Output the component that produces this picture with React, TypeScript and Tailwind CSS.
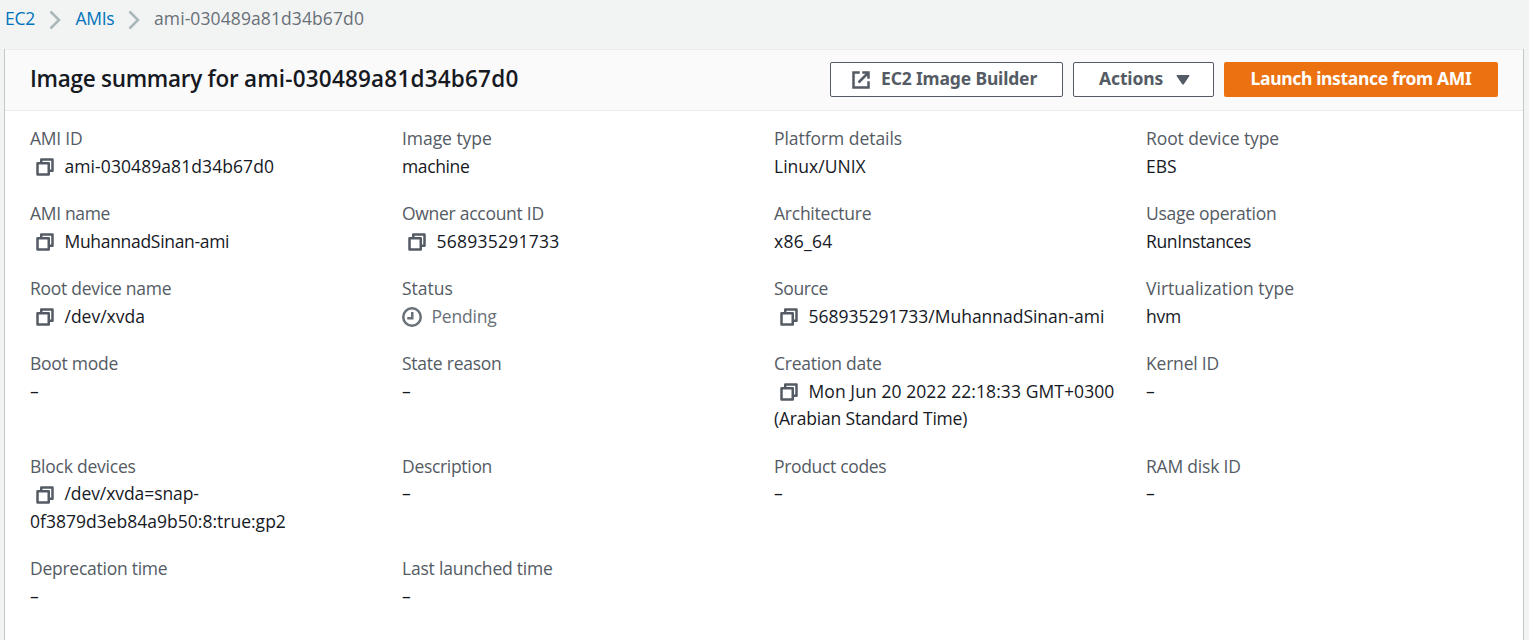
import type { ReactNode } from "react";

type Line = { text: string; className: string };

type Field = {
  label: string;
  labelClass: string;
  value?: Line[];
  kind?: "copy" | "pending";
};

const fields: Field[] = [
  { label: "AMI ID", labelClass: "tracking-[-0.25px]", value: [{ text: "ami-030489a81d34b67d0", className: "tracking-[0.08px]" }], kind: "copy" },
  { label: "Image type", labelClass: "tracking-[-0.05px]", value: [{ text: "machine", className: "tracking-[-0.38px]" }] },
  { label: "Platform details", labelClass: "tracking-[-0.05px]", value: [{ text: "Linux/UNIX", className: "tracking-[0.02px]" }] },
  { label: "Root device type", labelClass: "tracking-[-0.1px]", value: [{ text: "EBS", className: "tracking-[0px]" }] },

  { label: "AMI name", labelClass: "tracking-[-0.33px]", value: [{ text: "MuhannadSinan-ami", className: "tracking-[-0.31px]" }], kind: "copy" },
  { label: "Owner account ID", labelClass: "tracking-[-0.28px]", value: [{ text: "568935291733", className: "tracking-[0.25px]" }], kind: "copy" },
  { label: "Architecture", labelClass: "tracking-[-0.24px]", value: [{ text: "x86_64", className: "tracking-[0.28px]" }] },
  { label: "Usage operation", labelClass: "tracking-[-0.28px]", value: [{ text: "RunInstances", className: "tracking-[-0.38px]" }] },

  { label: "Root device name", labelClass: "tracking-[-0.27px]", value: [{ text: "/dev/xvda", className: "tracking-[-0.01px]" }], kind: "copy" },
  { label: "Status", labelClass: "tracking-[0px]", value: [{ text: "Pending", className: "tracking-[-0.2px]" }], kind: "pending" },
  { label: "Source", labelClass: "tracking-[-0.36px]", value: [{ text: "568935291733/MuhannadSinan-ami", className: "tracking-[-0.02px]" }], kind: "copy" },
  { label: "Virtualization type", labelClass: "tracking-[0.03px]", value: [{ text: "hvm", className: "tracking-[-0.2px]" }] },

  { label: "Boot mode", labelClass: "tracking-[-0.27px]" },
  { label: "State reason", labelClass: "tracking-[-0.24px]" },
  {
    label: "Creation date",
    labelClass: "tracking-[-0.23px]",
    value: [
      { text: "Mon Jun 20 2022 22:18:33 GMT+0300", className: "tracking-[0.08px]" },
      { text: " (Arabian Standard Time)", className: "tracking-[-0.19px]" },
    ],
    kind: "copy",
  },
  { label: "Kernel ID", labelClass: "tracking-[-0.2px]" },

  {
    label: "Block devices",
    labelClass: "tracking-[-0.23px]",
    value: [
      { text: "/dev/xvda=snap-", className: "tracking-[-0.08px]" },
      { text: "0f3879d3eb84a9b50:8:true:gp2", className: "tracking-[0.01px]" },
    ],
    kind: "copy",
  },
  { label: "Description", labelClass: "tracking-[-0.31px]" },
  { label: "Product codes", labelClass: "tracking-[-0.33px]" },
  { label: "RAM disk ID", labelClass: "tracking-[-0.2px]" },

  { label: "Deprecation time", labelClass: "tracking-[-0.26px]" },
  { label: "Last launched time", labelClass: "tracking-[-0.21px]" },
];

function Icon({ className, children }: { className?: string; children: ReactNode }) {
  return (
    <svg
      viewBox="0 0 16 16"
      fill="none"
      stroke="currentColor"
      strokeWidth="2"
      className={`inline-block size-5 shrink-0 ${className ?? ""}`}
    >
      {children}
    </svg>
  );
}

function CopyIcon() {
  return (
    <Icon className="mx-[5px] mt-[-2px] mb-[-1px] align-middle text-[#545b64]">
      <path d="M2 5h9v9H2z" strokeLinejoin="round" />
      <path d="M5 5V2h9v9h-3" strokeLinejoin="round" />
    </Icon>
  );
}

function FieldValue({ field }: { field: Field }) {
  if (!field.value) return <div className="text-[#16191f]">–</div>;
  const lines = field.value.map((line) => (
    <span key={line.text} className={line.className}>
      {line.text}
    </span>
  ));
  if (field.kind === "pending") {
    return (
      <div className="flex items-center gap-[9.5px] text-[#687078]">
        <Icon className="mt-px">
          <circle cx="8" cy="8" r="7" />
          <path d="M8.2 4v5H4.2" />
        </Icon>
        {lines}
      </div>
    );
  }
  return (
    <div className="text-[#16191f]">
      {field.kind === "copy" && (
        <span className="mr-[4.5px]">
          <CopyIcon />
        </span>
      )}
      {lines}
    </div>
  );
}

function Separator() {
  return (
    <svg viewBox="0 0 12 20" fill="none" stroke="#aab7b8" strokeWidth="2.5" className="h-5 w-3">
      <path d="M1.5 1.5 10 10l-8.5 8.5" />
    </svg>
  );
}

export default function App() {
  return (
    <div className="flex h-[640px] w-full flex-col overflow-hidden bg-[#f2f3f3] font-['Open_Sans',sans-serif] text-[17.5px] leading-[27.5px]">
      <nav className="flex h-[49px] items-start pt-[5px] pl-[5px]">
        <a className="w-[44px] tracking-[-0.2px] text-[#0073bb]">EC2</a>
        <span className="w-[26.5px] pt-[5px]"><Separator /></span>
        <a className="w-[52.5px] tracking-[-0.3px] text-[#0073bb]">AMIs</a>
        <span className="w-[26px] pt-[5px]"><Separator /></span>
        <span className="tracking-[0.1px] text-[#687078]">ami-030489a81d34b67d0</span>
      </nav>

      <main className="ml-1 flex w-[1520px] flex-1 flex-col border-x border-[#c0c8c8] bg-white">
        <header className="flex h-[62px] items-center justify-between border-y border-t-[#eaeded] border-b-[#eaeded] bg-[#fafafa] pr-[25px] pl-[25px]">
          <h1 className="pb-[3px] text-[22.5px] font-semibold text-[#16191f]">
            <span className="tracking-[-0.28px]">Image summary for </span>
            <span className="tracking-[0.2px]">ami-030489a81d34b67d0</span>
          </h1>
          <div className="flex gap-[10px] pb-px font-['Noto_Sans',sans-serif] font-bold">
            <button className="flex h-[35px] w-[233px] items-center rounded-[2px] border border-[#545b64] bg-white pb-[2px] pl-5 tracking-[-0.16px] text-[#545b64]">
              <Icon className="mt-[2px] mr-[10px]">
                <path d="M7 2H2v12h12V9" />
                <path d="M9 2h5v5M13.6 2.4 6 10" />
              </Icon>
              EC2 Image Builder
            </button>
            <button className="flex h-[35px] w-[141px] items-center rounded-[2px] border border-[#545b64] bg-white pb-[2px] pl-[25px] tracking-[-0.12px] text-[#545b64]">
              Actions
              <svg viewBox="0 0 14 10" className="mt-[2px] ml-[13px] h-[10px] w-[14px]" fill="currentColor">
                <path d="M1.2 0h11.6q1 .3.4 1.2L7.8 9.2q-.8.9-1.6 0L.8 1.2Q.2.3 1.2 0z" />
              </svg>
            </button>
            <button className="flex h-[35px] w-[274px] items-center justify-center rounded-[2px] bg-[#ec7211] pb-[2px] tracking-[-0.34px] text-white">
              Launch instance from AMI
            </button>
          </div>
        </header>

        <section className="grid grid-cols-[repeat(4,372px)] gap-y-5 pt-[14px] pl-[25px]">
          {fields.map((field) => (
            <div key={field.label} className="pr-[25px]">
              <div className={`text-[#545b64] ${field.labelClass}`}>{field.label}</div>
              <FieldValue field={field} />
            </div>
          ))}
        </section>
      </main>
    </div>
  );
}
